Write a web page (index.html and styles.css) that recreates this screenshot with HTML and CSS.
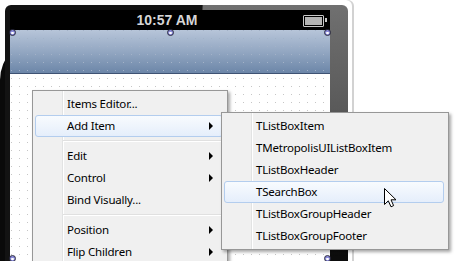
FILE: index.html
```html
<!DOCTYPE html>
<html lang="en">
<head>
    <meta charset="UTF-8">
    <title>Designer - Add Item</title>
    <link rel="stylesheet" href="styles.css">
</head>
<body>
    <div class="stage">
        <div class="phone">
            <div class="bezel">
                <div class="screen">
                    <div class="status-bar">
                        <span class="clock">10:57 AM</span>
                        <span class="battery"><span class="battery-fill"></span></span>
                    </div>
                    <div class="nav-bar"></div>
                    <div class="content"></div>
                </div>
            </div>
        </div>

        <span class="handle handle-tl"></span>
        <span class="handle handle-tc"></span>
        <span class="handle handle-tr"></span>
        <span class="handle handle-bl"></span>
        <span class="handle handle-br"></span>

        <ul class="menu main-menu">
            <li class="menu-item">Items Editor...</li>
            <li class="menu-item active has-sub">Add Item</li>
            <li class="menu-sep"></li>
            <li class="menu-item has-sub">Edit</li>
            <li class="menu-item has-sub">Control</li>
            <li class="menu-item">Bind Visually...</li>
            <li class="menu-sep"></li>
            <li class="menu-item has-sub">Position</li>
            <li class="menu-item has-sub">Flip Children</li>
        </ul>

        <ul class="menu sub-menu">
            <li class="menu-item">TListBoxItem</li>
            <li class="menu-item">TMetropolisUIListBoxItem</li>
            <li class="menu-item">TListBoxHeader</li>
            <li class="menu-item active">TSearchBox</li>
            <li class="menu-item">TListBoxGroupHeader</li>
            <li class="menu-item">TListBoxGroupFooter</li>
        </ul>

        <svg class="cursor" width="13" height="20" viewBox="0 0 13 20">
            <path d="M0.5 0.5 L0.5 16.5 L4.3 12.8 L7 18.8 L9.6 17.6 L7 11.8 L12 11.8 Z" fill="#fff" stroke="#000" stroke-width="1" stroke-linejoin="miter"/>
        </svg>
    </div>
</body>
</html>
```

FILE: styles.css
```css
body {
    margin: 0;
    background: #fff;
    font-family: "Noto Sans", "Open Sans", sans-serif;
    font-size: 11.5px;
    letter-spacing: -0.2px;
    color: #000;
    overflow: hidden;
}

.stage {
    position: relative;
    width: 457px;
    height: 261px;
    overflow: hidden;
}

/* phone on the design canvas */
.phone {
    position: absolute;
    left: 0;
    top: 0;
    width: 352px;
    height: 300px;
    box-shadow: 2px 0 0 #d2d2d2;
    border-top-right-radius: 6px;
}

/* outer body edge showing on the far left */
.phone::before {
    content: "";
    position: absolute;
    left: 0;
    top: 38px;
    width: 60px;
    bottom: 0;
    background: #0a0a0a;
    border-top-left-radius: 42px;
}

.bezel {
    position: absolute;
    left: 5px;
    top: 5px;
    width: 338px;
    bottom: 0;
    padding: 5px 0 0 5px;
    border-radius: 6px 6px 0 0;
    background:
        linear-gradient(93deg, #131313 55%, transparent 55.3%),
        linear-gradient(180deg, #707070, #5a5a5a 35%, #3a3a3a 60%, #0c0c0c 85%);
}

.screen {
    width: 320px;
    height: 290px;
    display: flex;
    flex-direction: column;
}

.status-bar {
    height: 20px;
    background: #000;
    display: flex;
    align-items: center;
    justify-content: center;
    position: relative;
}

.clock {
    font-family: "Liberation Sans", Arial, sans-serif;
    font-weight: bold;
    font-size: 14px;
    letter-spacing: 0;
    color: #d6d6d6;
    margin-left: -6px;
}

.battery {
    position: absolute;
    left: 293px;
    top: 5px;
    width: 17px;
    height: 8px;
    border: 1.5px solid #c8c8c8;
    border-radius: 1px;
    padding: 1px;
}

.battery::after {
    content: "";
    position: absolute;
    right: -4px;
    top: 2px;
    width: 2px;
    height: 4px;
    background: #c8c8c8;
}

.battery-fill {
    display: block;
    height: 100%;
    background: #b4b4b4;
}

.nav-bar {
    height: 43px;
    border-bottom: 1px solid #3e5273;
    background:
        url("data:image/svg+xml,%3Csvg xmlns='http://www.w3.org/2000/svg' width='8' height='8'%3E%3Crect x='1' y='0' width='1' height='1' fill='%23a3b2c8'/%3E%3C/svg%3E"),
        linear-gradient(#b7c5d9, #93a7c2 50%, #6c86a8);
}

.content {
    flex: 1;
    background:
        url("data:image/svg+xml,%3Csvg xmlns='http://www.w3.org/2000/svg' width='8' height='8'%3E%3Crect x='1' y='4' width='1' height='1' fill='%23c6c6c6'/%3E%3C/svg%3E"),
        #fff;
}

/* selection handles */
.handle {
    position: absolute;
    width: 5px;
    height: 5px;
    border: 1px solid #2a2a40;
    border-radius: 50%;
    background: radial-gradient(circle at 50% 60%, #fff 0 1px, #8a8ad8 1.5px);
}

.handle-tl { left: 9px; top: 29px; }
.handle-tc { left: 167px; top: 29px; }
.handle-tr { left: 324px; top: 29px; }
.handle-bl { left: 9px; top: 255px; }
.handle-br { left: 324px; top: 255px; }

/* context menus */
.menu {
    position: absolute;
    list-style: none;
    margin: 0;
    padding: 2px 4px 2px 2px;
    border: 1px solid #979797;
    background:
        linear-gradient(90deg, transparent 29px, #e2e3e3 29px 30px, #fff 30px 31px, transparent 31px),
        #f0f0f0;
    box-shadow: 2px 2px 3px rgba(0, 0, 0, 0.35);
}

.main-menu {
    left: 32px;
    top: 90px;
    width: 188px;
}

.sub-menu {
    left: 221px;
    top: 112px;
    width: 220px;
}

.menu-item {
    height: 20px;
    line-height: 20px;
    padding: 0 9px 0 31px;
    border: 1px solid transparent;
    border-radius: 3px;
    display: flex;
    align-items: center;
    white-space: nowrap;
}

.menu-item.active {
    border-color: #b3cdee;
    background: linear-gradient(#f8fbfe, #e5eefb);
}

.has-sub::after {
    content: "";
    margin-left: auto;
    border-left: 4px solid #000;
    border-top: 4px solid transparent;
    border-bottom: 4px solid transparent;
}

.menu-sep {
    height: 8px;
    margin-left: 28px;
    background: linear-gradient(transparent 3px, #e0e0e0 3px 4px, #fff 4px 5px, transparent 5px);
}

.cursor {
    position: absolute;
    left: 384px;
    top: 188px;
}
```
